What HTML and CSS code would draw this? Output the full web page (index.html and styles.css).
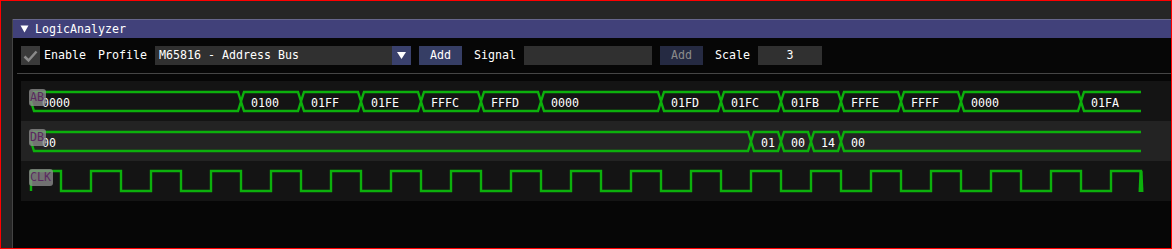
FILE: index.html
```html
<!DOCTYPE html>
<html>
<head>
  <meta charset="UTF-8">
  <title>LogicAnalyzer</title>
  <link rel="stylesheet" href="styles.css">
</head>
<body>
  <div class="screen">
    <div class="window">
      <div class="title-bar">
        <svg class="collapse" width="9" height="8" viewBox="0 0 9 8"><polygon points="0.5,0.5 8.5,0.5 4.5,7.5" fill="#fff"/></svg>
        <span class="title">LogicAnalyzer</span>
      </div>

      <div class="content">
        <div class="toolbar">
          <span class="checkbox">
            <svg width="19" height="19" viewBox="0 0 19 19"><polyline points="3.5,10.5 7.5,14.5 15.5,5.5" fill="none" stroke="#8a8a8a" stroke-width="2.5"/></svg>
          </span>
          <span class="label enable">Enable</span>
          <span class="label">Profile</span>
          <div class="combo">
            <span class="combo-value">M65816 - Address Bus</span>
            <span class="combo-arrow">
              <svg width="9" height="7" viewBox="0 0 9 7"><polygon points="0,0 9,0 4.5,7" fill="#fff"/></svg>
            </span>
          </div>
          <button class="btn">Add</button>
          <span class="label">Signal</span>
          <span class="input signal"></span>
          <button class="btn disabled">Add</button>
          <span class="label">Scale</span>
          <span class="input scale">3</span>
        </div>

        <div class="separator"></div>

        <div class="tracks">
          <!-- address bus -->
          <div class="track dark">
            <svg class="wave" width="1150" height="40" viewBox="0 0 1150 40">
              <path d="M10 20.5L13 11H217L220 20.5L217 30H13Z"/>
              <path d="M220 20.5L223 11H277L280 20.5L277 30H223Z"/>
              <path d="M280 20.5L283 11H337L340 20.5L337 30H283Z"/>
              <path d="M340 20.5L343 11H397L400 20.5L397 30H343Z"/>
              <path d="M400 20.5L403 11H457L460 20.5L457 30H403Z"/>
              <path d="M460 20.5L463 11H517L520 20.5L517 30H463Z"/>
              <path d="M520 20.5L523 11H637L640 20.5L637 30H523Z"/>
              <path d="M640 20.5L643 11H697L700 20.5L697 30H643Z"/>
              <path d="M700 20.5L703 11H757L760 20.5L757 30H703Z"/>
              <path d="M760 20.5L763 11H817L820 20.5L817 30H763Z"/>
              <path d="M820 20.5L823 11H877L880 20.5L877 30H823Z"/>
              <path d="M880 20.5L883 11H937L940 20.5L937 30H883Z"/>
              <path d="M940 20.5L943 11H1057L1060 20.5L1057 30H943Z"/>
              <path d="M1120 11H1063L1060 20.5L1063 30H1120"/>
              <text x="21" y="26">0000</text>
              <text x="230" y="26">0100</text>
              <text x="290" y="26">01FF</text>
              <text x="350" y="26">01FE</text>
              <text x="410" y="26">FFFC</text>
              <text x="470" y="26">FFFD</text>
              <text x="530" y="26">0000</text>
              <text x="650" y="26">01FD</text>
              <text x="710" y="26">01FC</text>
              <text x="770" y="26">01FB</text>
              <text x="830" y="26">FFFE</text>
              <text x="890" y="26">FFFF</text>
              <text x="950" y="26">0000</text>
              <text x="1070" y="26">01FA</text>
            </svg>
            <span class="badge">AB</span>
          </div>

          <!-- data bus -->
          <div class="track light">
            <svg class="wave" width="1150" height="40" viewBox="0 0 1150 40">
              <path d="M10 20.5L13 11H727L730 20.5L727 30H13Z"/>
              <path d="M730 20.5L733 11H757L760 20.5L757 30H733Z"/>
              <path d="M760 20.5L763 11H787L790 20.5L787 30H763Z"/>
              <path d="M790 20.5L793 11H817L820 20.5L817 30H793Z"/>
              <path d="M1120 11H823L820 20.5L823 30H1120"/>
              <text x="21" y="26">00</text>
              <text x="740" y="26">01</text>
              <text x="770" y="26">00</text>
              <text x="800" y="26">14</text>
              <text x="830" y="26">00</text>
            </svg>
            <span class="badge">DB</span>
          </div>

          <!-- clock -->
          <div class="track dark">
            <svg class="wave" width="1150" height="40" viewBox="0 0 1150 40">
              <path d="M10 30V10h30V30
                h30V10h30V30h30V10h30V30h30V10h30V30h30V10h30V30h30V10h30V30h30V10h30V30
                h30V10h30V30h30V10h30V30h30V10h30V30h30V10h30V30h30V10h30V30h30V10h30V30
                h30V10h30V30h30V10h30V30h30V10h30V30h30V10h30V30h30V10h30V30h30V10h30V30"/>
              <polygon class="edge" points="1118.5,10 1121.5,10 1122.5,31 1117.5,31"/>
            </svg>
            <span class="badge">CLK</span>
          </div>
        </div>
      </div>
    </div>
  </div>
</body>
</html>
```

FILE: styles.css
```css
body {
  margin: 0;
  background: #262626;
  font-family: 'DejaVu Sans Mono', monospace;
  font-size: 11.63px;
  color: #fff;
}

.screen {
  display: flex;
  width: 1172px;
  height: 249px;
  box-sizing: border-box;
  border: 1px solid #ff0000;
  padding: 18px 0 0 11px;
  background: #262626;
  overflow: hidden;
}

.window {
  flex: none;
  width: 1190px;
  background: #060606;
  border-left: 1px solid #444;
}

.title-bar {
  display: flex;
  align-items: center;
  height: 18px;
  background: #41417a;
  border-top: 1px solid #66668c;
}

.collapse {
  margin-left: 7px;
  display: block;
}

.title {
  margin-left: 6px;
  line-height: 18px;
}

.content {
  padding: 8px;
}

.toolbar {
  display: flex;
  align-items: center;
  height: 19px;
  line-height: 19px;
}

.checkbox {
  width: 19px;
  height: 19px;
  background: #3a3a3a;
}

.checkbox svg {
  display: block;
}

.label {
  margin-left: 12px;
  margin-right: 8px;
  white-space: pre;
}

.label.enable {
  margin-left: 4px;
  margin-right: 0;
}

.combo {
  display: flex;
  width: 256px;
  height: 19px;
  background: #303030;
}

.combo-value {
  flex: 1;
  padding-left: 4px;
  white-space: pre;
}

.combo-arrow {
  display: flex;
  align-items: center;
  justify-content: center;
  width: 19px;
  background: #3a416d;
}

.btn {
  width: 43px;
  height: 19px;
  margin-left: 8px;
  padding: 0;
  border: none;
  background: #363e65;
  color: #fff;
  font: inherit;
  line-height: 19px;
}

.btn.disabled {
  background: #252a42;
  color: #8a8a8a;
}

.input {
  height: 19px;
  background: #303030;
}

.input.signal {
  width: 128px;
}

.input.scale {
  width: 64px;
  text-align: center;
}

.separator {
  height: 1px;
  margin: 8px 0 0 -4px;
  background: #454545;
}

.tracks {
  margin-top: 7px;
  width: 1170px;
}

.track {
  position: relative;
  height: 40px;
}

.track.dark {
  background: #141414;
}

.track.light {
  background: #232323;
}

.wave {
  display: block;
}

.wave path {
  fill: none;
  stroke: #0cb00c;
  stroke-width: 2.4;
}

.wave .edge {
  fill: #0cb00c;
}

.wave text {
  fill: #fff;
  font-family: 'DejaVu Sans Mono', monospace;
  font-size: 11.63px;
}

.badge {
  position: absolute;
  left: 8px;
  top: 8px;
  height: 17px;
  padding: 0 2px 0 1px;
  line-height: 16px;
  border-radius: 3px;
  background: rgba(140, 140, 140, 0.78);
  color: #5a2a60;
}
```
